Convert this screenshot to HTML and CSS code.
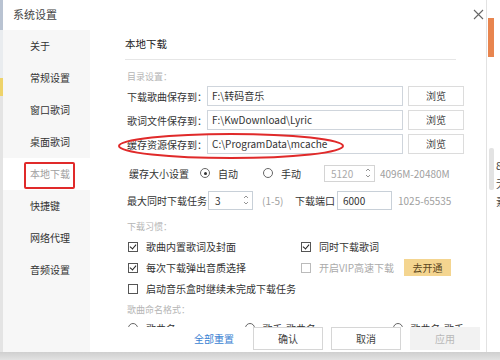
FILE: index.html
```html
<!DOCTYPE html>
<html lang="zh-CN">
<head>
    <meta charset="UTF-8">
    <title>系统设置 - 本地下载</title>
    <link rel="stylesheet" href="styles.css">
</head>
<body>
    <div class="screen">
        <div class="top">
            <div class="edge"></div>

            <div class="dialog">
                <div class="dlg-head">
                    <span class="dlg-title">系统设置</span>
                    <svg class="close" width="11" height="11" viewBox="0 0 11 11">
                        <path d="M1 1 L10 10 M10 1 L1 10" stroke="#666" stroke-width="1.1" fill="none"/>
                    </svg>
                </div>

                <div class="dlg-body">
                    <ul class="side">
                        <li>关于</li>
                        <li>常规设置</li>
                        <li>窗口歌词</li>
                        <li>桌面歌词</li>
                        <li class="active">本地下载</li>
                        <li>快捷键</li>
                        <li>网络代理</li>
                        <li>音频设置</li>
                    </ul>

                    <div class="main">
                        <div class="scroll">
                            <div class="page-title">本地下载</div>

                            <div class="sec">目录设置：</div>
                            <div class="path-row first">
                                <span class="path-label">下载歌曲保存到：</span>
                                <div class="path-input">F:\转码音乐</div>
                                <div class="browse">浏览</div>
                            </div>
                            <div class="path-row">
                                <span class="path-label">歌词文件保存到：</span>
                                <div class="path-input">F:\KwDownload\Lyric</div>
                                <div class="browse">浏览</div>
                            </div>
                            <div class="path-row">
                                <span class="path-label">缓存资源保存到：</span>
                                <div class="path-input">C:\ProgramData\mcache</div>
                                <div class="browse">浏览</div>
                            </div>

                            <div class="size-row">
                                <span class="size-label">缓存大小设置</span>
                                <span class="opt opt-auto"><i class="radio on"></i>自动</span>
                                <span class="opt opt-manual"><i class="radio"></i>手动</span>
                                <div class="spin spin-size">
                                    <span class="val muted">5120</span>
                                    <svg class="arrows" width="6" height="12" viewBox="0 0 6 12">
                                        <path d="M1 4 L3 2 L5 4 M1 8 L3 10 L5 8" stroke="#888" stroke-width="0.9" fill="none"/>
                                    </svg>
                                </div>
                                <span class="range">4096M-20480M</span>
                            </div>

                            <div class="task-row">
                                <span class="task-label">最大同时下载任务</span>
                                <div class="spin spin-task">
                                    <span class="val">3</span>
                                    <svg class="arrows" width="6" height="12" viewBox="0 0 6 12">
                                        <path d="M1 4 L3 2 L5 4 M1 8 L3 10 L5 8" stroke="#888" stroke-width="0.9" fill="none"/>
                                    </svg>
                                </div>
                                <span class="range hint">(1-5)</span>
                                <span class="port-label">下载端口</span>
                                <div class="port-input">6000</div>
                                <span class="range port-range">1025-65535</span>
                            </div>

                            <div class="sec sec-habit">下载习惯：</div>
                            <div class="checks">
                                <label class="check"><i class="box on"></i>歌曲内置歌词及封面</label>
                                <label class="check"><i class="box on"></i>同时下载歌词</label>
                                <label class="check"><i class="box on"></i>每次下载弹出音质选择</label>
                                <label class="check disabled"><i class="box"></i>开启VIP高速下载<span class="vip-btn">去开通</span></label>
                                <label class="check"><i class="box"></i>启动音乐盒时继续未完成下载任务</label>
                                <span></span>
                            </div>

                            <div class="sec sec-name">歌曲命名格式：</div>
                            <div class="name-row">
                                <span class="opt name-a"><i class="radio"></i>歌曲名</span>
                                <span class="opt name-b"><i class="radio"></i>歌手-歌曲名</span>
                                <span class="opt name-c"><i class="radio"></i>歌曲名-歌手</span>
                            </div>
                        </div>

                        <div class="foot">
                            <a class="reset">全部重置</a>
                            <div class="btn">确认</div>
                            <div class="btn">取消</div>
                            <div class="btn off">应用</div>
                        </div>
                    </div>
                </div>

                <!-- red annotations drawn over the screenshot -->
                <div class="mark-box"></div>
                <svg class="mark-ring" width="232" height="30" viewBox="0 0 232 30">
                    <ellipse cx="116" cy="15" rx="112" ry="12" stroke="#e02a2a" stroke-width="2" fill="none"/>
                </svg>
            </div>

            <div class="behind">
                <div class="orange"></div>
                <div class="bg-scroll"></div>
                <div class="bg-text">
                    <span>8</span>
                    <span>无</span>
                    <span>素</span>
                </div>
            </div>
        </div>
        <div class="shadow"></div>
    </div>
</body>
</html>
```

FILE: styles.css
```css
* {
    box-sizing: border-box;
}

body {
    margin: 0;
    font-family: "Noto Sans CJK SC", "Noto Sans", sans-serif;
    font-size: 10px;
    color: #333;
    background: #fff;
}

.screen {
    width: 500px;
    height: 360px;
    overflow: hidden;
    display: flex;
    flex-direction: column;
}

.top {
    display: flex;
    height: 352px;
}

/* thin slice of the window behind, on the left */
.edge {
    width: 3px;
    background: linear-gradient(#b9c3d2 0, #b9c3d2 30px, #e9ecef 30px, #e9ecef 78px,
        #eed36a 78px, #eed36a 96px, #e4e4e4 96px);
}

.dialog {
    position: relative;
    width: 484px;
    display: flex;
    flex-direction: column;
    background: #fff;
    border-right: 1px solid #e2e2e2;
}

.dlg-head {
    height: 30px;
    display: flex;
    align-items: center;
    justify-content: space-between;
    padding: 0 2px 2px 10px;
}

.dlg-title {
    font-size: 11px;
    color: #444;
}

.close {
    margin-top: 1px;
}

.dlg-body {
    flex: 1;
    display: flex;
    min-height: 0;
}

/* left menu */
.side {
    list-style: none;
    margin: 0;
    padding: 0;
    width: 87px;
    background: #f7f7f7;
}

.side li {
    height: 32px;
    line-height: 32px;
    padding-left: 27px;
    color: #333;
}

.side li.active {
    background: #fff;
    color: #a0a0a0;
}

.main {
    flex: 1;
    display: flex;
    flex-direction: column;
    min-width: 0;
}

.scroll {
    flex: 1;
    overflow: hidden;
    padding: 0 22px 0 35px;
}

.page-title {
    height: 30px;
    line-height: 28px;
    font-size: 10.5px;
    color: #222;
    border-bottom: 1px solid #e6e6e6;
    margin-right: 8px;
}

.sec {
    height: 16px;
    line-height: 16px;
    margin-top: 9px;
    padding-left: 2px;
    font-size: 9px;
    color: #b5b5b5;
}

/* directory rows */
.path-row {
    display: flex;
    align-items: center;
    height: 20px;
    margin-top: 4px;
}

.path-row.first {
    margin-top: 1px;
}

.path-label {
    width: 82px;
    padding-left: 2px;
    white-space: nowrap;
}

.path-input {
    width: 196px;
    height: 20px;
    line-height: 18px;
    border: 1px solid #cfd5dc;
    padding-left: 4px;
    font-size: 10px;
    color: #333;
}

.browse {
    width: 56px;
    height: 20px;
    line-height: 18px;
    margin-left: 5px;
    border: 1px solid #dcdcdc;
    text-align: center;
    color: #444;
}

/* cache size */
.size-row {
    display: flex;
    align-items: center;
    height: 16px;
    margin-top: 11px;
}

.size-label {
    width: 75px;
    padding-left: 4px;
}

.opt {
    display: flex;
    align-items: center;
    white-space: nowrap;
}

.opt-auto {
    width: 63px;
}

.opt-manual {
    width: 61px;
}

.radio {
    width: 10px;
    height: 10px;
    border: 1px solid #666;
    border-radius: 50%;
    margin-right: 8px;
    display: flex;
    align-items: center;
    justify-content: center;
}

.radio.on::after {
    content: "";
    width: 3px;
    height: 3px;
    border-radius: 50%;
    background: #333;
}

.spin {
    display: flex;
    align-items: center;
    justify-content: space-between;
    border: 1px solid #d4d4d4;
    padding: 0 3px 0 6px;
}

.spin-size {
    width: 51px;
    height: 17px;
}

.spin-task {
    width: 45px;
    height: 19px;
    border-color: #c8d0d8;
}

.val.muted {
    color: #aaa;
}

.range {
    margin-left: 5px;
    color: #a0a0a0;
    white-space: nowrap;
}

/* task row */
.task-row {
    display: flex;
    align-items: center;
    height: 18px;
    margin-top: 10px;
}

.task-label {
    width: 83px;
    padding-left: 2px;
    white-space: nowrap;
}

.hint {
    margin-left: 9px;
    width: 24px;
}

.port-label {
    margin-left: 9px;
    width: 42px;
}

.port-input {
    width: 55px;
    height: 19px;
    line-height: 17px;
    border: 1px solid #c8d0d8;
    padding-left: 5px;
}

.port-range {
    margin-left: 6px;
}

.sec-habit {
    margin-top: 10px;
}

/* check boxes */
.checks {
    display: grid;
    grid-template-columns: 173px 1fr;
    grid-auto-rows: 21px;
    margin-top: 1px;
}

.check {
    display: flex;
    align-items: center;
    padding-left: 3px;
    white-space: nowrap;
}

.box {
    width: 10px;
    height: 10px;
    border: 1px solid #555;
    margin-right: 8px;
    position: relative;
}

.box.on::after {
    content: "";
    position: absolute;
    left: 2px;
    top: 0px;
    width: 3px;
    height: 5px;
    border: solid #222;
    border-width: 0 1.3px 1.3px 0;
    transform: rotate(40deg);
}

.check.disabled {
    color: #aaa;
}

.check.disabled .box {
    border-color: #bbb;
}

.vip-btn {
    margin-left: 10px;
    width: 47px;
    height: 17px;
    line-height: 17px;
    text-align: center;
    background: #f4d590;
    color: #5a4620;
}

.sec-name {
    margin-top: 3px;
}

.name-row {
    display: flex;
    height: 16px;
    margin-top: 2px;
    padding-left: 3px;
}

.name-a {
    width: 122px;
}

.name-b {
    width: 155px;
}

/* footer buttons */
.foot {
    height: 25px;
    display: flex;
    align-items: flex-start;
    justify-content: flex-end;
    padding-right: 6px;
    background: #fff;
}

.reset {
    color: #3a7fd2;
    line-height: 23px;
    margin-right: 11px;
}

.btn {
    width: 70px;
    height: 23px;
    line-height: 21px;
    margin-left: 8px;
    border: 1px solid #d6d6d6;
    text-align: center;
    color: #444;
}

.btn.off {
    margin-left: 9px;
    background: #f2f2f2;
    border-color: #f2f2f2;
    color: #b8b8b8;
}

/* annotations */
.mark-box {
    position: absolute;
    left: 21px;
    top: 162px;
    width: 51px;
    height: 27px;
    border: 2px solid #e02a2a;
    border-radius: 2px;
}

.mark-ring {
    position: absolute;
    left: 112px;
    top: 131px;
}

/* window behind, on the right */
.behind {
    flex: 1;
    position: relative;
    overflow: hidden;
    background: #fff;
}

.orange {
    position: absolute;
    left: 1px;
    top: 18px;
    width: 6px;
    height: 39px;
    background: #e8854f;
}

.bg-scroll {
    position: absolute;
    left: 2px;
    top: 148px;
    width: 5px;
    height: 42px;
    border-radius: 2px;
    background: #e3e3e3;
}

.bg-text {
    position: absolute;
    left: 9px;
    top: 156px;
    display: flex;
    flex-direction: column;
    line-height: 18px;
    font-size: 11px;
    color: #444;
}

.shadow {
    flex: 1;
    background: linear-gradient(#cfcfcf, #e2e2e2);
}
```
